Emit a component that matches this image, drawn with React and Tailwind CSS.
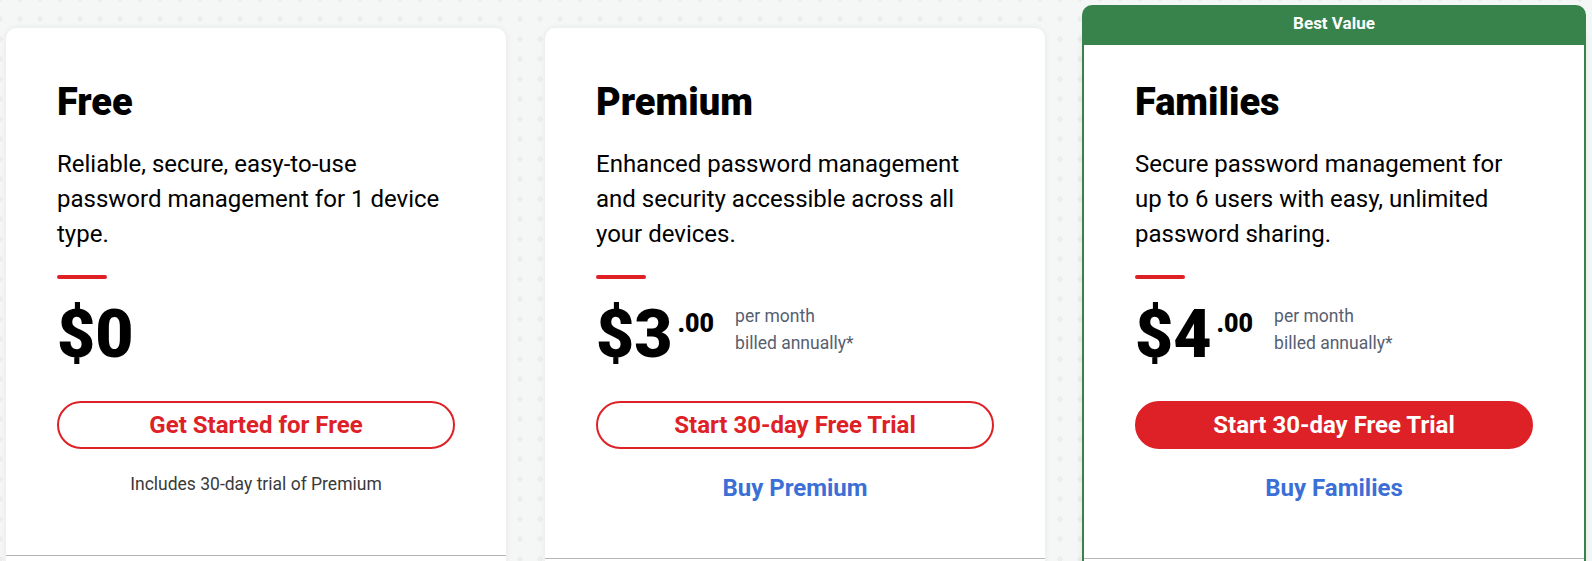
import React from "react";

function PriceTag({ whole, cents }) {
  return (
    <div className="flex items-start">
      <span className="text-[66px] leading-none font-black text-black">${whole}</span>
      {cents && (
        <span className="text-[25px] leading-none font-black text-black mt-[9px] ml-[5px]">.{cents}</span>
      )}
      {cents && (
        <div className="ml-[21px] mt-[1px] flex flex-col text-[17.5px] leading-[27px] text-[#566070]">
          <span>per month</span>
          <span>billed annually*</span>
        </div>
      )}
    </div>
  );
}

function Card({ title, lines, whole, cents, cta, solid, extra, extraLink, best, bottomPad }) {
  return (
    <div
      className={
        "relative shrink-0 bg-white rounded-[10px] flex flex-col shadow-[0_0_6px_rgba(0,0,0,0.07)] " +
        (best ? "-ml-[2px] w-[504px] border-x-2 border-b-2 border-[#38834b]" : "w-[500px]")
      }
    >
      {best && (
        <div className="absolute top-[-23px] left-[-2px] right-[-2px] h-[40px] rounded-t-[10px] bg-[#38834b] flex items-start justify-center pt-[8px] text-white text-[17px] font-bold leading-[20px]">
          Best Value
        </div>
      )}
      <div className={"px-[51px] pt-[55px] flex flex-col " + bottomPad}>
        <h2 className="text-[38px] leading-none font-black text-black">{title}</h2>
        <p className="mt-[26px] text-[24px] leading-[35px] text-black">
          {lines.map((l, i) => (
            <React.Fragment key={i}>
              {l}
              {i < lines.length - 1 && <br />}
            </React.Fragment>
          ))}
        </p>
        <div className="mt-[23px] w-[50px] h-[4px] rounded-full bg-[#dd2126]" />
        <div className="mt-[23px]">
          <PriceTag whole={whole} cents={cents} />
        </div>
        <button
          className={
            "mt-[33px] h-[48px] w-full rounded-full border-2 border-[#dd2126] text-[24px] font-bold leading-none " +
            (solid ? "bg-[#dd2126] text-white" : "bg-white text-[#dd2126]")
          }
        >
          {cta}
        </button>
        {extra && (
          <p className="mt-[23px] text-center text-[17.5px] leading-[24px] text-[#3a3a3a]">{extra}</p>
        )}
        {extraLink && (
          <a className="mt-[24px] text-center text-[24px] leading-[30px] font-bold text-[#3b6fd6]">{extraLink}</a>
        )}
      </div>
      <div className="border-t border-[#b5b5b5] h-[60px]" />
    </div>
  );
}

export default function App() {
  return (
    <div className="w-[1592px] h-[561px] overflow-hidden font-['Roboto','Noto_Sans',sans-serif] bg-[#f5f6f6] bg-[radial-gradient(circle,#ecedec_2.5px,transparent_3px)] [background-size:20px_20px] [background-position:-10px_-11px]">
      <div className="flex items-start gap-[39px] pl-[6px] pt-[28px]">
        <Card
          title="Free"
          lines={["Reliable, secure, easy-to-use", "password management for 1 device", "type."]}
          whole="0"
          cta="Get Started for Free"
          extra="Includes 30-day trial of Premium"
          bottomPad="pb-[59px]"
        />
        <Card
          title="Premium"
          lines={["Enhanced password management", "and security accessible across all", "your devices."]}
          whole="3"
          cents="00"
          cta="Start 30-day Free Trial"
          extraLink="Buy Premium"
          bottomPad="pb-[55px]"
        />
        <Card
          title="Families"
          lines={["Secure password management for", "up to 6 users with easy, unlimited", "password sharing."]}
          whole="4"
          cents="00"
          cta="Start 30-day Free Trial"
          solid
          extraLink="Buy Families"
          best
          bottomPad="pb-[55px]"
        />
      </div>
    </div>
  );
}
